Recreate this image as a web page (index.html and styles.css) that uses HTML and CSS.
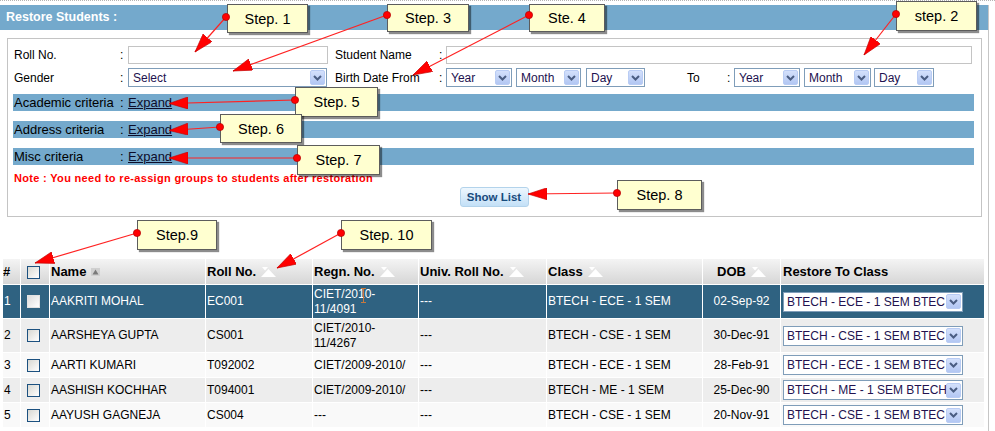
FILE: index.html
```html
<!DOCTYPE html>
<html>
<head>
<meta charset="utf-8">
<title>Restore Students</title>
<link rel="stylesheet" href="styles.css">
</head>
<body>
<div class="page">
  <div class="panel">
    <div class="title">Restore Students :</div>
    <div class="filters">
      <div class="row">
        <span class="lbl">Roll No.</span><span class="colon">:</span>
        <span class="input w-roll"></span>
        <span class="lbl lbl2">Student Name</span><span class="colon c2">:</span>
        <span class="input w-name"></span>
      </div>
      <div class="row row2">
        <span class="lbl">Gender</span><span class="colon">:</span>
        <span class="sel w-gender"><span class="sel-text">Select</span><span class="sel-btn"><svg width="9" height="6" viewBox="0 0 9 6"><path d="M1 1 L4.5 4.5 L8 1" fill="none" stroke="#4a5d82" stroke-width="2"/></svg></span></span>
        <span class="lbl lbl2 lbl2b">Birth Date From</span><span class="colon c2">:</span>
        <span class="sel w-year"><span class="sel-text">Year</span><span class="sel-btn"><svg width="9" height="6" viewBox="0 0 9 6"><path d="M1 1 L4.5 4.5 L8 1" fill="none" stroke="#4a5d82" stroke-width="2"/></svg></span></span>
        <span class="sel w-month"><span class="sel-text">Month</span><span class="sel-btn"><svg width="9" height="6" viewBox="0 0 9 6"><path d="M1 1 L4.5 4.5 L8 1" fill="none" stroke="#4a5d82" stroke-width="2"/></svg></span></span>
        <span class="sel w-day"><span class="sel-text">Day</span><span class="sel-btn"><svg width="9" height="6" viewBox="0 0 9 6"><path d="M1 1 L4.5 4.5 L8 1" fill="none" stroke="#4a5d82" stroke-width="2"/></svg></span></span>
        <span class="lbl lbl-to">To</span><span class="colon c2">:</span>
        <span class="sel w-year"><span class="sel-text">Year</span><span class="sel-btn"><svg width="9" height="6" viewBox="0 0 9 6"><path d="M1 1 L4.5 4.5 L8 1" fill="none" stroke="#4a5d82" stroke-width="2"/></svg></span></span>
        <span class="sel w-month2"><span class="sel-text">Month</span><span class="sel-btn"><svg width="9" height="6" viewBox="0 0 9 6"><path d="M1 1 L4.5 4.5 L8 1" fill="none" stroke="#4a5d82" stroke-width="2"/></svg></span></span>
        <span class="sel w-day2"><span class="sel-text">Day</span><span class="sel-btn"><svg width="9" height="6" viewBox="0 0 9 6"><path d="M1 1 L4.5 4.5 L8 1" fill="none" stroke="#4a5d82" stroke-width="2"/></svg></span></span>
      </div>
      <div class="bar bar-first"><span class="lbl">Academic criteria</span><span class="colon">:</span><a class="expand" href="#">Expand</a></div>
      <div class="bar"><span class="lbl">Address criteria</span><span class="colon">:</span><a class="expand" href="#">Expand</a></div>
      <div class="bar"><span class="lbl">Misc criteria</span><span class="colon">:</span><a class="expand" href="#">Expand</a></div>
      <div class="note">Note : You need to re-assign groups to students after restoration</div>
      <div class="actions"><button class="btn" type="button">Show List</button></div>
    </div>

    <table class="grid">
      <colgroup>
        <col class="c-num"><col class="c-chk"><col class="c-name"><col class="c-roll"><col class="c-regn"><col class="c-univ"><col class="c-class"><col class="c-dob"><col class="c-rest">
      </colgroup>
      <thead>
        <tr>
          <th class="t-num">#</th>
          <th class="t-chk"><span class="cb"></span></th>
          <th>Name<svg class="sort-act" width="9" height="8" viewBox="0 0 9 8"><rect width="9" height="8" fill="#d0d0d0"/><path d="M1.5 6.5 L4.5 1.5 L7.5 6.5 Z" fill="#7a7a7a"/></svg></th>
          <th>Roll No.<svg class="sort" width="15" height="10" viewBox="0 0 15 10"><path d="M0 10 L7.5 2 L15 10 Z" fill="#fff"/><path d="M1 0 L7 0 L4 3.5 Z" fill="#fff"/></svg></th>
          <th>Regn. No.<svg class="sort" width="15" height="10" viewBox="0 0 15 10"><path d="M0 10 L7.5 2 L15 10 Z" fill="#fff"/><path d="M1 0 L7 0 L4 3.5 Z" fill="#fff"/></svg></th>
          <th>Univ. Roll No.<svg class="sort" width="15" height="10" viewBox="0 0 15 10"><path d="M0 10 L7.5 2 L15 10 Z" fill="#fff"/><path d="M1 0 L7 0 L4 3.5 Z" fill="#fff"/></svg></th>
          <th>Class<svg class="sort" width="15" height="10" viewBox="0 0 15 10"><path d="M0 10 L7.5 2 L15 10 Z" fill="#fff"/><path d="M1 0 L7 0 L4 3.5 Z" fill="#fff"/></svg></th>
          <th class="t-dob">DOB<svg class="sort" width="15" height="10" viewBox="0 0 15 10"><path d="M0 10 L7.5 2 L15 10 Z" fill="#fff"/><path d="M1 0 L7 0 L4 3.5 Z" fill="#fff"/></svg></th>
          <th class="t-rest">Restore To Class</th>
        </tr>
      </thead>
      <tbody>
        <tr class="r-sel r-tall">
          <td>1</td><td class="t-chk"><span class="cb cb-sel"></span></td><td>AAKRITI MOHAL</td><td>EC001</td><td>CIET/2010-<br>11/4091</td><td>---</td><td>BTECH - ECE - 1 SEM</td><td class="t-dob">02-Sep-92</td>
          <td class="t-rest"><span class="sel w-rest"><span class="sel-text">BTECH - ECE - 1 SEM BTEC</span><span class="sel-btn"><svg width="9" height="6" viewBox="0 0 9 6"><path d="M1 1 L4.5 4.5 L8 1" fill="none" stroke="#4a5d82" stroke-width="2"/></svg></span></span></td>
        </tr>
        <tr class="r-even r-tall">
          <td>2</td><td class="t-chk"><span class="cb"></span></td><td>AARSHEYA GUPTA</td><td>CS001</td><td>CIET/2010-<br>11/4267</td><td>---</td><td>BTECH - CSE - 1 SEM</td><td class="t-dob">30-Dec-91</td>
          <td class="t-rest"><span class="sel w-rest"><span class="sel-text">BTECH - CSE - 1 SEM BTEC</span><span class="sel-btn"><svg width="9" height="6" viewBox="0 0 9 6"><path d="M1 1 L4.5 4.5 L8 1" fill="none" stroke="#4a5d82" stroke-width="2"/></svg></span></span></td>
        </tr>
        <tr class="r-odd">
          <td>3</td><td class="t-chk"><span class="cb"></span></td><td>AARTI KUMARI</td><td>T092002</td><td>CIET/2009-2010/</td><td>---</td><td>BTECH - ECE - 1 SEM</td><td class="t-dob">28-Feb-91</td>
          <td class="t-rest"><span class="sel w-rest"><span class="sel-text">BTECH - ECE - 1 SEM BTEC</span><span class="sel-btn"><svg width="9" height="6" viewBox="0 0 9 6"><path d="M1 1 L4.5 4.5 L8 1" fill="none" stroke="#4a5d82" stroke-width="2"/></svg></span></span></td>
        </tr>
        <tr class="r-even">
          <td>4</td><td class="t-chk"><span class="cb"></span></td><td>AASHISH KOCHHAR</td><td>T094001</td><td>CIET/2009-2010/</td><td>---</td><td>BTECH - ME - 1 SEM</td><td class="t-dob">25-Dec-90</td>
          <td class="t-rest"><span class="sel w-rest"><span class="sel-text">BTECH - ME - 1 SEM BTECH</span><span class="sel-btn"><svg width="9" height="6" viewBox="0 0 9 6"><path d="M1 1 L4.5 4.5 L8 1" fill="none" stroke="#4a5d82" stroke-width="2"/></svg></span></span></td>
        </tr>
        <tr class="r-odd">
          <td>5</td><td class="t-chk"><span class="cb"></span></td><td>AAYUSH GAGNEJA</td><td>CS004</td><td>---</td><td>---</td><td>BTECH - CSE - 1 SEM</td><td class="t-dob">20-Nov-91</td>
          <td class="t-rest"><span class="sel w-rest"><span class="sel-text">BTECH - CSE - 1 SEM BTEC</span><span class="sel-btn"><svg width="9" height="6" viewBox="0 0 9 6"><path d="M1 1 L4.5 4.5 L8 1" fill="none" stroke="#4a5d82" stroke-width="2"/></svg></span></span></td>
        </tr>
      </tbody>
    </table>
  </div>

  <div class="callout co-1">Step. 1</div>
  <div class="callout co-3">Step. 3</div>
  <div class="callout co-4">Ste. 4</div>
  <div class="callout co-2">step. 2</div>
  <div class="callout co-5">Step. 5</div>
  <div class="callout co-6">Step. 6</div>
  <div class="callout co-7">Step. 7</div>
  <div class="callout co-8">Step. 8</div>
  <div class="callout co-9">Step.9</div>
  <div class="callout co-10">Step. 10</div>

  <svg class="arrows" width="995" height="431" viewBox="0 0 995 431">
    <defs>
      <marker id="ah" viewBox="0 0 19 12" refX="19" refY="6" markerWidth="19" markerHeight="12" orient="auto" markerUnits="userSpaceOnUse">
        <path d="M0 0 L19 6 L0 12 Z" fill="#ff0000" stroke="#c00000" stroke-width="0.6"/>
      </marker>
    </defs>
    <g stroke="#ff2222" stroke-width="1.2" marker-end="url(#ah)">
      <line x1="226" y1="17" x2="195" y2="52"/>
      <line x1="387" y1="15" x2="233" y2="71"/>
      <line x1="529" y1="15" x2="413" y2="75"/>
      <line x1="896" y1="14" x2="864" y2="55"/>
      <line x1="295" y1="100" x2="169" y2="103.5"/>
      <line x1="220" y1="127" x2="169" y2="130.5"/>
      <line x1="297" y1="158" x2="169" y2="158"/>
      <line x1="617" y1="193" x2="528" y2="194"/>
      <line x1="137" y1="233" x2="35" y2="263"/>
      <line x1="341" y1="233" x2="277" y2="268"/>
    </g>
    <g fill="#ff0000" stroke="#b00000" stroke-width="0.7">
      <circle cx="226" cy="17" r="3.6"/>
      <circle cx="387" cy="15" r="3.6"/>
      <circle cx="529" cy="15" r="3.6"/>
      <circle cx="896" cy="14" r="3.6"/>
      <circle cx="295" cy="100" r="3.6"/>
      <circle cx="220" cy="127" r="3.6"/>
      <circle cx="297" cy="158" r="3.6"/>
      <circle cx="617" cy="193" r="3.6"/>
      <circle cx="137" cy="233" r="3.6"/>
      <circle cx="341" cy="233" r="3.6"/>
    </g>
    <path d="M361 288.5 H366 M363.5 288.5 V302.5 M361 302.5 H366" stroke="#c8793c" stroke-width="1" fill="none"/>
  </svg>
</div>
</body>
</html>
```

FILE: styles.css
```css
* { box-sizing: border-box; }
html, body { margin: 0; padding: 0; background: #fff; }
body {
  font-family: "Liberation Sans", Arial, sans-serif;
  font-size: 12px;
  color: #000;
  width: 995px;
  height: 431px;
  overflow: hidden;
}
.page {
  position: relative;
  width: 995px;
  height: 431px;
  border-top: 1px dotted #b4b4b4;
}
.panel {
  width: 989px;
  height: 426px;
  margin-top: 4px;
  border-right: 1px solid #c6c6c6;
}
.title {
  height: 25px;
  line-height: 25px;
  background: #74a9cc;
  color: #fff;
  font-weight: bold;
  font-size: 12.5px;
  padding-left: 6px;
}
.filters {
  margin: 8px 0 0 7px;
  width: 975px;
  border: 1px solid #c4c4c4;
  padding: 7px 6px 9px 5px;
}
.row {
  display: flex;
  align-items: center;
  height: 18px;
  padding-left: 1px;
}
.row2 { margin-top: 4px; height: 19px; padding-top: 1px; }
.lbl { width: 106px; flex: none; white-space: nowrap; }
.colon { width: 8px; flex: none; }
.c2 { width: 7px; }
.lbl2 { margin-left: 7px; width: 104px; }
.lbl2b { margin-left: 8px; }
.lbl-to { margin-left: 42px; width: 40px; }
.input {
  flex: none;
  height: 18px;
  border: 1px solid #c4c4c4;
  background: #fff;
}
.w-roll { width: 200px; }
.w-name { width: 526px; }

.sel {
  flex: none;
  display: inline-flex;
  align-items: center;
  height: 19px;
  border: 1px solid #7f9db9;
  background: #fff;
  padding: 1px;
  vertical-align: middle;
}
.row2 .sel { margin-top: -1px; }
.sel-text {
  flex: 1;
  min-width: 0;
  overflow: hidden;
  white-space: nowrap;
  padding-left: 3px;
  padding-top: 2px;
  color: #22124f;
  font-size: 12px;
  line-height: 15px;
}
.grid .sel-text { padding-left: 2px; padding-top: 1px; }
.sel-btn {
  flex: none;
  width: 15px;
  height: 15px;
  border: 1px solid #b9ccf4;
  border-radius: 2px;
  background: linear-gradient(#d3e0fb, #b3c7f3);
  display: flex;
  align-items: center;
  justify-content: center;
}
.w-gender { width: 199px; }
.w-year { width: 66px; }
.w-month { width: 65px; margin-left: 4px; }
.w-day { width: 59px; margin-left: 5px; }
.w-month2 { width: 67px; margin-left: 4px; }
.w-day2 { width: 60px; margin-left: 3px; }

.bar {
  display: flex;
  align-items: center;
  height: 17px;
  margin-top: 10px;
  width: 961px;
  background: #74a9cc;
  padding-left: 1px;
  font-size: 13px;
}
.bar-first { margin-top: 7px; }
.expand { color: #0d0d2a; text-decoration: underline; }

.note {
  margin-top: 6px;
  padding-left: 1px;
  line-height: 14px;
  color: #ff0000;
  font-weight: bold;
  font-size: 11px;
  letter-spacing: 0.32px;
}
.actions {
  margin-top: 2px;
  height: 20px;
  text-align: center;
}
.btn {
  width: 69px;
  height: 20px;
  padding: 0;
  border: 1px solid #b3d3eb;
  border-radius: 3px;
  background: linear-gradient(#eef7fe, #c3e0f7);
  color: #174a7c;
  font-family: "Liberation Sans", Arial, sans-serif;
  font-weight: bold;
  font-size: 11.5px;
}

.grid {
  margin: 42px 0 0 3px;
  width: 982px;
  table-layout: fixed;
  border-collapse: separate;
  border-spacing: 0;
}
.c-num { width: 18px; }
.c-chk { width: 29px; }
.c-name { width: 156px; }
.c-roll { width: 107px; }
.c-regn { width: 106px; }
.c-univ { width: 128px; }
.c-class { width: 156px; }
.c-dob { width: 78px; }
.c-rest { width: 204px; }

.grid th, .grid td {
  border-right: 1px solid #fff;
  border-bottom: 1px solid #fff;
  padding: 0 0 0 1px;
  text-align: left;
  vertical-align: middle;
  white-space: nowrap;
  overflow: hidden;
}
.grid th {
  height: 26px;
  background: linear-gradient(#f4f4f4, #d6d6d6);
  font-size: 13px;
  font-weight: bold;
}
.grid td {
  height: 25px;
  font-size: 12px;
  line-height: 15px;
}
.grid tr.r-tall td { height: 34px; }
.grid th.t-num { padding-left: 0; }
.grid .t-chk { padding-left: 6px; }
.grid .t-dob { text-align: center; padding-left: 0; }
.grid .t-rest { padding-left: 2px; }
.r-sel td { background: #2f6281; color: #fff; }
.r-even td { background: #ededed; }
.r-odd td { background: #f9f9f9; }

.sort { margin-left: 5px; vertical-align: -1px; }
.sort-act { margin-left: 5px; vertical-align: 0; }

.cb {
  display: inline-block;
  width: 13px;
  height: 13px;
  border: 1px solid #1c5180;
  background: linear-gradient(135deg, #d8d8d2, #ffffff);
  vertical-align: middle;
}
.cb-sel { border-color: #e2e2e2; background: linear-gradient(135deg, #dcdcdc, #ffffff); }

.w-rest { width: 180px; height: 20px; }

.callout {
  position: absolute;
  z-index: 2;
  display: flex;
  align-items: center;
  justify-content: center;
  background: #ffffd0;
  border: 1px solid #5c5c5c;
  box-shadow: 2px 2px 1px rgba(0, 0, 0, 0.45);
  font-size: 14.5px;
  color: #000;
  white-space: nowrap;
}
.co-1 { left: 227px; top: 3px; width: 81px; height: 29px; }
.co-3 { left: 387px; top: 3px; width: 82px; height: 28px; }
.co-4 { left: 529px; top: 3px; width: 76px; height: 28px; }
.co-2 { left: 896px; top: 0; width: 81px; height: 30px; }
.co-5 { left: 295px; top: 86px; width: 83px; height: 30px; }
.co-6 { left: 220px; top: 113px; width: 82px; height: 29px; }
.co-7 { left: 297px; top: 144px; width: 83px; height: 30px; }
.co-8 { left: 617px; top: 179px; width: 85px; height: 30px; }
.co-9 { left: 137px; top: 219px; width: 80px; height: 30px; }
.co-10 { left: 341px; top: 219px; width: 91px; height: 30px; }

.arrows {
  position: absolute;
  left: 0;
  top: -1px;
  z-index: 3;
  pointer-events: none;
}
```
